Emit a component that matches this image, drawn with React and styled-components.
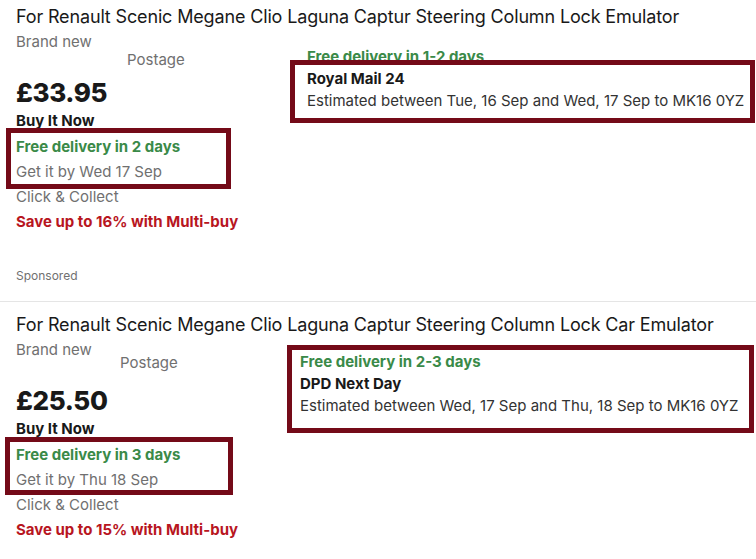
import React from 'react'
import styled, { createGlobalStyle } from 'styled-components'

const GlobalStyle = createGlobalStyle`
    html, body {
        margin: 0;
        padding: 0;
        background: #ffffff;
    }
    body {
        font-family: Inter, "Open Sans", sans-serif;
        color: #191919;
    }
`

const listings = [
    {
        title: 'For Renault Scenic Megane Clio Laguna Captur Steering Column Lock Emulator',
        price: '£33.95',
        freeIn: 'Free delivery in 2 days',
        getBy: 'Get it by Wed 17 Sep',
        save: 'Save up to 16% with Multi-buy',
        shipFree: 'Free delivery in 1-2 days',
        carrier: 'Royal Mail 24',
        estimate: 'Estimated between Tue, 16 Sep and Wed, 17 Sep to MK16 0YZ',
        sponsored: true,
        top: 5,
        rowShift: 0,
        rightShift: -6,
        postageIndent: 111,
        priceGap: 8,
        leftWidth: 291,
        // annotation frames: top, right, bottom, left offsets
        leftFrame: [-6, 0, -5, -10],
        leftFrameWidth: 215,
        rightFrame: [-8, 1, -11, -17],
        frameWholeRight: false,
    },
    {
        title: 'For Renault Scenic Megane Clio Laguna Captur Steering Column Lock Car Emulator',
        price: '£25.50',
        freeIn: 'Free delivery in 3 days',
        getBy: 'Get it by Thu 18 Sep',
        save: 'Save up to 15% with Multi-buy',
        shipFree: 'Free delivery in 2-3 days',
        carrier: 'DPD Next Day',
        estimate: 'Estimated between Wed, 17 Sep and Thu, 18 Sep to MK16 0YZ',
        sponsored: false,
        top: 11,
        rowShift: -5,
        rightShift: -4,
        postageIndent: 104,
        priceGap: 13,
        leftWidth: 284,
        leftFrame: [-5, 0, -3, -11],
        leftFrameWidth: 217,
        rightFrame: [-6, 2, -16, -13],
        frameWholeRight: true,
    },
]

function Listing({ item }) {
    const shipping = (
        <>
            <Carrier>{item.carrier}</Carrier>
            <Muted>{item.estimate}</Muted>
        </>
    )

    return (
        <Card top={item.top} last={!item.sponsored}>
            <Title>{item.title}</Title>
            <Condition>Brand new</Condition>
            <Row shift={item.rowShift}>
                <LeftCol width={item.leftWidth}>
                    <Postage indent={item.postageIndent}>Postage</Postage>
                    <Price gap={item.priceGap}>{item.price}</Price>
                    <BuyNow>Buy It Now</BuyNow>
                    <Frame offsets={item.leftFrame} width={item.leftFrameWidth}>
                        <Green>{item.freeIn}</Green>
                        <Muted>{item.getBy}</Muted>
                    </Frame>
                    <Muted>Click &amp; Collect</Muted>
                    <Save>{item.save}</Save>
                </LeftCol>
                <RightCol shift={item.rightShift}>
                    {item.frameWholeRight ? (
                        <Frame offsets={item.rightFrame}>
                            <Green small>{item.shipFree}</Green>
                            {shipping}
                        </Frame>
                    ) : (
                        <>
                            <Green small>{item.shipFree}</Green>
                            <Frame offsets={item.rightFrame}>{shipping}</Frame>
                        </>
                    )}
                </RightCol>
            </Row>
            {item.sponsored && <Sponsored>Sponsored</Sponsored>}
        </Card>
    )
}

export default function App() {
    return (
        <>
            <GlobalStyle />
            <Page>
                {listings.map((item, index) => (
                    <Listing key={index} item={item} />
                ))}
            </Page>
        </>
    )
}

const Page = styled.div`
    width: 756px;
    height: 559px;
    overflow: hidden;
    background: #fff;
`

const Card = styled.div`
    padding: ${props => props.top}px 0 ${props => props.last ? 0 : 15}px 16px;
    border-bottom: ${props => props.last ? 'none' : '1px solid #e5e5e5'};
`

const Title = styled.div`
    font-size: 18px;
    line-height: 24px;
    color: #191919;
    letter-spacing: -0.15px;
    white-space: nowrap;
`

const Condition = styled.div`
    margin-top: 3px;
    font-size: 15px;
    line-height: 20px;
    color: #707070;
`

const Row = styled.div`
    margin-top: ${props => props.shift}px;
    display: flex;
    align-items: flex-start;
`

const LeftCol = styled.div`
    width: ${props => props.width}px;
    flex: none;
    display: flex;
    flex-direction: column;
    align-items: flex-start;
`

const RightCol = styled.div`
    flex: 1;
    margin-top: ${props => props.shift}px;
    display: flex;
    flex-direction: column;
    align-items: stretch;
`

const Postage = styled.div`
    margin-left: ${props => props.indent}px;
    font-size: 15px;
    line-height: 16px;
    color: #707070;
`

const Price = styled.div`
    margin-top: ${props => props.gap}px;
    font-size: 26px;
    line-height: 34px;
    font-weight: 800;
    color: #191919;
    letter-spacing: -0.4px;
`

const BuyNow = styled.div`
    font-size: 15px;
    line-height: 22px;
    font-weight: 700;
    color: #191919;
`

const Frame = styled.div`
    position: relative;
    margin-top: 2px;
    ${props => props.width ? `width: ${props.width}px;` : ''}

    &::after {
        content: '';
        position: absolute;
        top: ${props => props.offsets[0]}px;
        right: ${props => props.offsets[1]}px;
        bottom: ${props => props.offsets[2]}px;
        left: ${props => props.offsets[3]}px;
        border: 5px solid #740a18;
        pointer-events: none;
    }

    ${RightCol} & {
        margin-top: 0;
    }
`

const Green = styled.div`
    font-size: 15px;
    line-height: ${props => props.small ? 22 : 25}px;
    font-weight: 700;
    color: #3a8a48;
    white-space: nowrap;
`

const Muted = styled.div`
    font-size: 15px;
    line-height: 25px;
    color: #707070;
    white-space: nowrap;

    ${RightCol} & {
        line-height: 22px;
        color: #333;
        letter-spacing: 0;
    }
`

const Carrier = styled.div`
    font-size: 15px;
    line-height: 22px;
    font-weight: 700;
    color: #191919;
`

const Save = styled.div`
    font-size: 15px;
    line-height: 25px;
    font-weight: 700;
    color: #b8161f;
    white-space: nowrap;
`

const Sponsored = styled.div`
    margin-top: 32px;
    font-size: 12px;
    line-height: 20px;
    color: #707070;
`
